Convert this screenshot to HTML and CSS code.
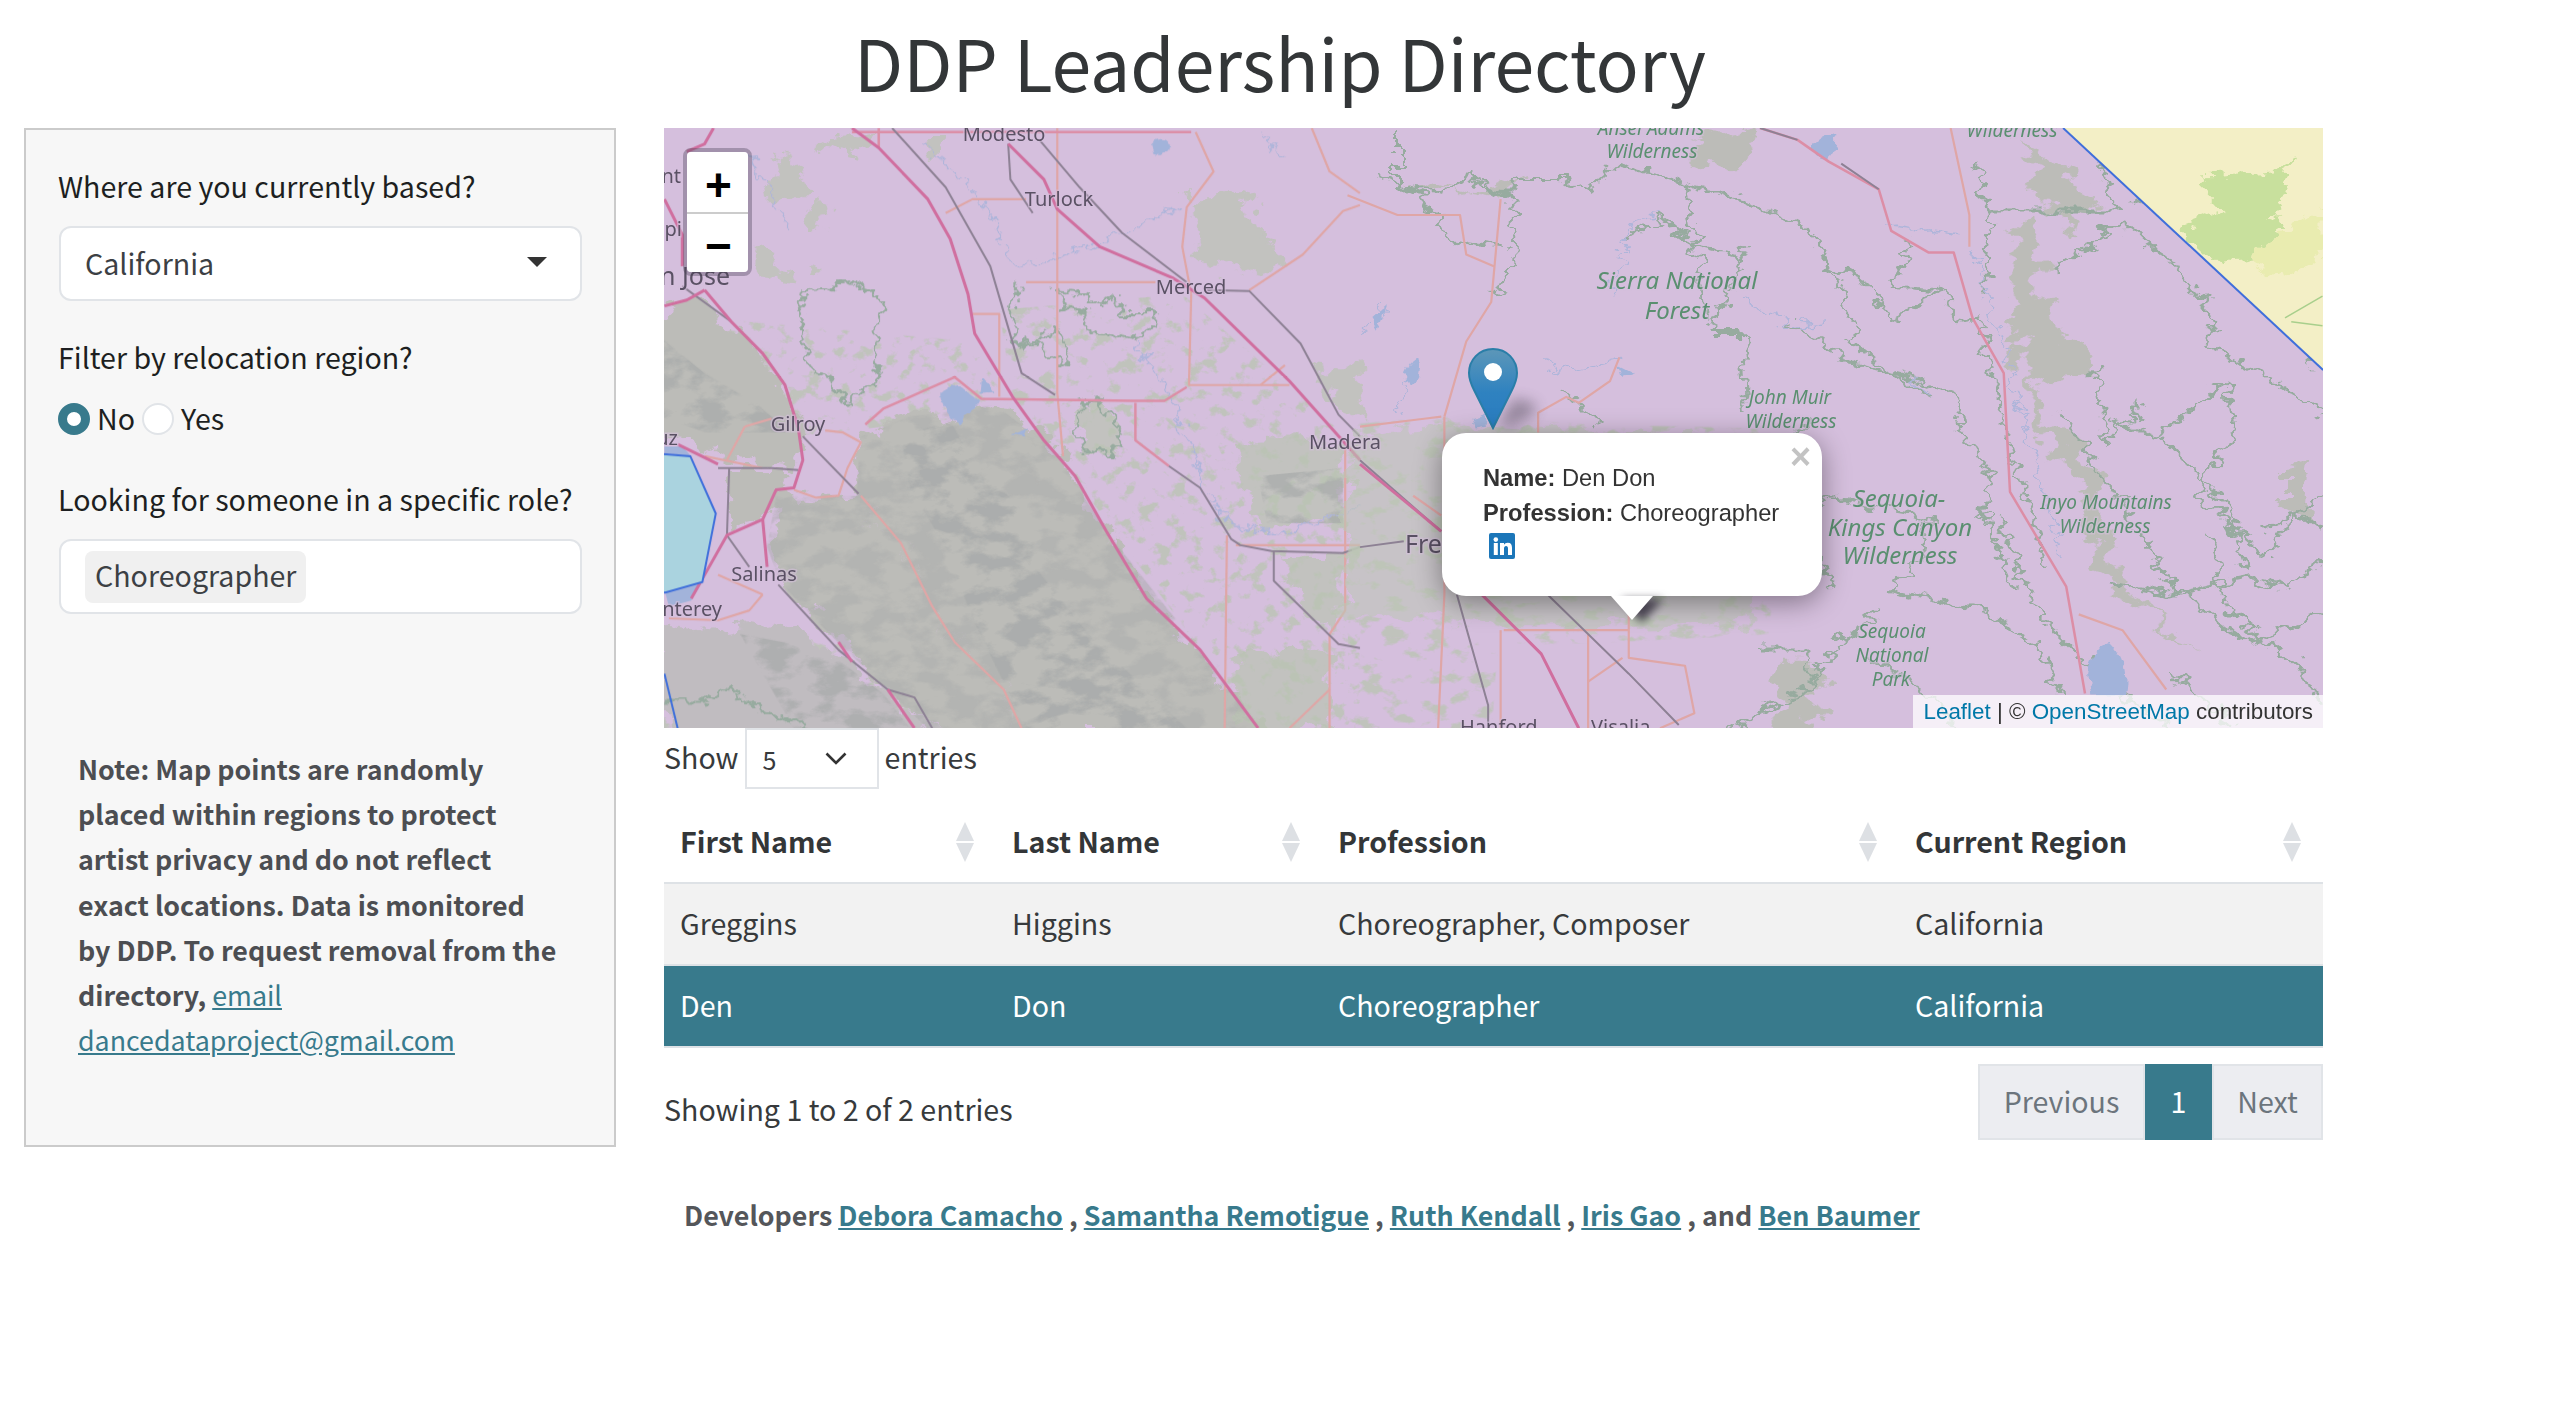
FILE: index.html
```html
<!DOCTYPE html>
<html lang="en">
<head>
<meta charset="utf-8">
<title>DDP Leadership Directory</title>
<link rel="stylesheet" href="styles.css">
</head>
<body>
<svg class="defs" width="0" height="0" aria-hidden="true">
  <defs>
    <symbol id="sort" viewBox="0 0 18 40">
      <path d="M9 0L18 19H0Z"/><path d="M0 21H18L9 40Z"/>
    </symbol>
    <filter id="rough" x="-10%" y="-10%" width="120%" height="120%">
      <feTurbulence type="fractalNoise" baseFrequency=".018" numOctaves="5" seed="4" result="n"/>
      <feDisplacementMap in="SourceGraphic" in2="n" scale="90" xChannelSelector="R" yChannelSelector="G"/>
      <feGaussianBlur stdDeviation=".8"/>
    </filter>
    <filter id="wiggle" x="-5%" y="-5%" width="110%" height="110%">
      <feTurbulence type="fractalNoise" baseFrequency=".035" numOctaves="3" seed="12" result="n"/>
      <feDisplacementMap in="SourceGraphic" in2="n" scale="50" xChannelSelector="R" yChannelSelector="G"/>
    </filter>
    <filter id="blob" x="-20%" y="-20%" width="140%" height="140%">
      <feTurbulence type="fractalNoise" baseFrequency=".05" numOctaves="2" seed="3" result="n"/>
      <feDisplacementMap in="SourceGraphic" in2="n" scale="18" xChannelSelector="R" yChannelSelector="G"/>
    </filter>
    <filter id="mottle" x="-5%" y="-5%" width="110%" height="110%">
      <feTurbulence type="fractalNoise" baseFrequency=".014 .022" numOctaves="5" seed="9" result="n"/>
      <feColorMatrix in="n" type="matrix" values="0 0 0 0 0  0 0 0 0 0  0 0 0 0 0  5 0 0 0 -2.1" result="a"/>
      <feComposite in="SourceGraphic" in2="a" operator="in"/>
      <feGaussianBlur stdDeviation="1"/>
    </filter>
    <filter id="grain" x="-5%" y="-5%" width="110%" height="110%">
      <feTurbulence type="fractalNoise" baseFrequency=".028" numOctaves="4" seed="21" result="n"/>
      <feColorMatrix in="n" type="matrix" values="0 0 0 0 0  0 0 0 0 0  0 0 0 0 0  7 0 0 0 -3.9" result="a"/>
      <feComposite in="SourceGraphic" in2="a" operator="in"/>
    </filter>
    <linearGradient id="pin" x1="0" y1="0" x2="0" y2="1">
      <stop offset="0" stop-color="#5d97b8"/>
      <stop offset=".55" stop-color="#2f82c0"/>
      <stop offset="1" stop-color="#2a7cc0"/>
    </linearGradient>
    <filter id="blur" x="-50%" y="-50%" width="200%" height="200%"><feGaussianBlur stdDeviation="7"/></filter>
  </defs>
</svg>

<h1 class="title">DDP Leadership Directory</h1>

<div class="layout">
  <aside class="sidebar">
    <label class="field-label first">Where are you currently based?</label>
    <div class="control select-control">
      <span>California</span>
      <span class="caret"></span>
    </div>

    <label class="field-label">Filter by relocation region?</label>
    <div class="radios">
      <span class="radio checked"></span><span class="radio-text">No</span>
      <span class="radio"></span><span class="radio-text">Yes</span>
    </div>

    <label class="field-label">Looking for someone in a specific role?</label>
    <div class="control tag-control">
      <span class="tag">Choreographer</span>
    </div>

    <p class="note"><b>Note: Map points are randomly placed within regions to protect artist privacy and do not reflect exact locations. Data is monitored by DDP. To request removal from the directory,</b> <a href="#">email dancedataproject@gmail.com</a></p>
  </aside>

  <main class="content">
    <section class="map">
      <svg class="map-svg" viewBox="0 0 1659 600" preserveAspectRatio="none" aria-hidden="true">
        <rect class="m-land" width="1659" height="600"/>

        <!-- west half: coordinates traced at 2.24 x 2.529 -->
        <g transform="translate(-4 -7.9) scale(.4464 .3954)">
          <g filter="url(#grain)">
            <path class="m-grain" d="M760 480L1170 440 1568 830V1538H1340L900 860 790 700Z"/>
            <path class="m-grain" d="M-20 1300H620V1540H-20Z"/>
            <path class="m-grain" d="M100 500L700 560 790 740 300 800Z"/>
          </g>
          <g filter="url(#rough)">
            <path class="m-range" d="M450 800L560 750 650 770 750 720 880 830 930 900 1000 1040 1090 1210 1210 1340 1360 1560H810L770 1440 610 1230 540 1070 440 950Z"/>
            <path class="m-range" d="M-20 500L60 450 160 520 260 640 300 740 330 800 300 880 150 860 60 800 -20 790Z"/>
            <path class="m-range" d="M150 890L300 890 280 960 230 1010 150 1030Z"/>
            <path class="m-range2" d="M-20 1280L100 1290 260 1270 370 1330 500 1440 620 1560H30Z"/>
            <path class="m-range" d="M260 950L440 950 540 1070 610 1230 770 1440 810 1560H620L500 1420 380 1300 270 1170 240 1080Z"/>
            <path class="m-soft" d="M240 100L300 95 330 190 260 190Z"/>
            <path class="m-soft" d="M210 310L270 340 290 420 220 410Z"/>
            <path class="m-soft" d="M340 215L385 220 370 290 330 280Z"/>
            <path class="m-soft" d="M340 360L375 365 370 400 340 395Z"/>
            <path class="m-soft" d="M1180 190L1310 190 1390 360 1310 390 1200 350Z"/>
            <path class="m-soft" d="M370 40L470 30 440 90 360 70Z"/>
            <path class="m-soft" d="M590 40L640 40 640 90 600 90Z"/>
            <path class="m-soft" d="M1290 810L1440 800 1540 830 1535 1030 1340 1030Z"/>
            <path class="m-soft" d="M940 720L1010 730 1030 840 950 840Z"/>
            <path class="m-soft" d="M1400 1100L1530 1100 1530 1300 1450 1240 1390 1170Z"/>
            <path class="m-soft" d="M1470 630L1568 610V770L1520 740Z"/>
            <path class="m-soft" d="M1290 1340L1500 1350 1500 1538H1300Z"/>
          </g>
          <g filter="url(#mottle)">
            <path class="m-dark" d="M540 800L650 760 720 900 830 990 840 1130 960 1300 1200 1560H830L700 1260 640 1080 560 930Z"/>
            <path class="m-dark2" d="M450 800L560 750 750 720 880 830 1000 1040 1210 1340 1360 1560H620L380 1300 270 1170 240 1080 260 950H440Z"/>
            <path class="m-dark" d="M-20 530L100 640 220 720 290 790 100 790 -20 740Z"/>
            <path class="m-dark" d="M180 1300L370 1340 500 1450 560 1538H300Z"/>
            <path class="m-dark" d="M1340 900L1530 880 1530 1020 1360 1020Z"/>
          </g>
          <g class="m-park" filter="url(#wiggle)">
            <path d="M320 430L390 425 410 410 490 440 505 500 480 530 480 600 490 650 420 720 380 650 350 640 320 590 325 520 310 480Z"/>
            <path d="M890 430L960 440 970 470 1010 445 1040 490 1115 490 1110 520 1050 555 950 530 960 490 900 470Z"/>
            <path d="M800 410L790 520 805 570 890 530 910 600 900 620 850 560 810 575"/>
            <path d="M940 720L975 705 1030 780 1020 845 950 835 930 780Z"/>
            <path d="M10 1470L100 1470 150 1440 240 1500 330 1530"/>
          </g>
          <g class="m-river" filter="url(#wiggle)">
            <path d="M590 60L680 150 745 250 790 370 890 345 985 310 1100 250 1170 220"/>
            <path d="M1060 560L1130 670 1200 850 1220 950 1290 1030 1400 1040 1568 980"/>
            <path d="M200 90L290 280"/>
            <path d="M1350 30L1390 100"/>
          </g>
          <g class="m-water" filter="url(#blob)">
            <path d="M630 692C650 680 660 660 672 672L715 712C700 745 680 745 672 772C650 750 630 720 630 692Z"/>
            <path d="M722 648L750 690 718 692Z"/>
            <path d="M1100 62C1115 45 1140 48 1140 65C1140 90 1115 92 1105 85Z"/>
            <path d="M790 795L825 780 815 800Z"/>
          </g>
          <g class="m-water">
            <path d="M12 1195L95 1168 70 1215 20 1230Z"/>
            <path d="M10 825L50 825 70 850 10 842Z"/>
          </g>
          <g class="m-minor">
            <path d="M640 235L700 200H820"/>
            <path d="M890 20V690L903 850"/>
            <path d="M820 410H1110"/>
            <path d="M700 490H760V700"/>
            <path d="M1190 440L1185 670H1410"/>
            <path d="M1200 30L1240 130 1180 220 1170 320 1190 440"/>
            <path d="M1320 430L1440 340 1530 230 1568 215"/>
            <path d="M1345 670L1400 620"/>
            <path d="M1270 1050L1265 1538"/>
            <path d="M1290 1075H1568"/>
            <path d="M1535 830V1240L1500 1300V1538"/>
            <path d="M1500 1440L1410 1538"/>
            <path d="M450 950L540 1070 610 1230 660 1320 770 1440 810 1538"/>
            <path d="M190 775L250 755"/>
            <path d="M190 775L150 860"/>
            <path d="M370 785L410 790 450 815 420 880 400 950 350 955 300 935"/>
            <path d="M1460 20L1500 130 1568 185"/>
            <path d="M100 850L230 880"/>
            <path d="M130 1150L230 1200"/>
            <path d="M230 1200L200 1240 130 1265 20 1260"/>
          </g>
          <g class="m-main">
            <path d="M460 770L500 730 600 680 660 650 720 705 1060 710 1130 710 1180 675"/>
            <path d="M1065 715V810L1140 875"/>
            <path d="M430 30H680"/>
            <path d="M680 30H1190"/>
            <path d="M490 20V70"/>
          </g>
          <g class="m-rail">
            <path d="M520 20L640 170 740 370 810 640 885 695"/>
            <path d="M780 60L785 150 835 235"/>
            <path d="M850 50L940 170 1035 285 1180 410"/>
            <path d="M1225 430L1320 432 1435 565 1520 745 1568 800"/>
            <path d="M1140 875L1210 930 1280 1060 1300 1075 1370 1090 1530 1095 1568 1080"/>
            <path d="M1375 1090V1165L1520 1325 1568 1335"/>
            <path d="M265 1175L400 1340 510 1440 570 1460 610 1538"/>
            <path d="M320 800L445 945"/>
            <path d="M50 420L160 510 230 590 280 670 310 780"/>
            <path d="M130 880L250 880 310 885"/>
            <path d="M155 880L150 1050 200 1130"/>
          </g>
          <g class="m-highway">
            <path d="M430 20L490 70 600 200 650 300 690 440 705 540 790 700 860 810 930 900 1000 1040 1090 1210 1210 1340 1340 1538"/>
            <path d="M100 430L160 510 230 590 280 670 310 780 320 860 300 930 260 935 230 1010 150 1050 110 1130 70 1210"/>
            <path d="M780 60L860 150 890 225 985 320 1150 400 1220 450 1410 660 1568 860"/>
            <path d="M10 200L50 290 50 370"/>
            <path d="M10 470L60 455 100 430"/>
            <path d="M60 80L100 60 120 20"/>
            <path d="M510 1440L570 1538"/>
            <path d="M400 1320L430 1370"/>
            <path d="M230 1010L240 1130"/>
            <path d="M40 820L130 870"/>
          </g>
          <path class="m-ocean" d="M-20 842L68 850 125 995 95 1168 12 1195 -20 1195Z"/>
          <path class="m-edge" d="M10 1400L40 1540"/>
        </g>

        <!-- east half: coordinates traced at 1.6 x 2.529 -->
        <g transform="translate(696 -7.9) scale(.625 .3954)">
          <g filter="url(#grain)">
            <path class="m-grain" d="M-20 770L130 750 380 770 640 780 660 1300 400 1320 220 1330 -20 1300Z"/>
            <path class="m-grain" d="M-20 1300L220 1330 210 1560H-20Z"/>
          </g>
          <g filter="url(#rough)">
            <path class="m-range" d="M1040 280L1085 240 1100 500 1170 600 1175 650 1080 670 1100 750 1190 900 1200 1100 1260 1240 1345 1345 1290 1290 1200 1180 1160 1060 1150 920 1090 780 1060 620 1040 440Z"/>
            <path class="m-range" d="M1060 50L1130 130 1175 200 1140 290 1090 200Z"/>
            <path class="m-range" d="M670 1360L730 1360V1560H670Z"/>
            <path class="m-range" d="M70 150L130 190 260 150 240 200 200 190Z"/>
            <path class="m-range" d="M550 40L620 20 640 90 590 130 540 110Z"/>
            <path class="m-soft2" d="M-20 790L130 770 380 790 600 800 640 1210 640 1270 400 1280 220 1280 -20 1240Z"/>
            <path class="m-range" d="M1480 870L1530 860 1520 1010 1480 980Z"/>
          </g>
          <g class="m-park" filter="url(#wiggle)">
            <path d="M60 20V170L130 180 180 130 190 170 235 180 260 150H330L360 180 410 110 480 140 520 160 630 210 720 280 750 370 810 410 850 510 930 420 960 510 990 500 1020 700 1060 940 1100 1130"/>
            <path d="M430 300L480 245 540 320 610 350 620 330 560 540 610 540 620 740"/>
            <path d="M690 510L780 610 880 650 950 690 960 780 1010 900 1000 1000 1050 1190"/>
            <path d="M520 160L560 510"/>
            <path d="M790 560L860 650 910 690"/>
            <path d="M1010 230H1210L1170 60"/>
            <path d="M1110 380L1220 260 1300 360 1370 500 1350 570 1440 640 1540 740"/>
            <path d="M1200 760L1270 800 1390 660 1400 780 1340 950 1450 1100 1500 1000 1540 950"/>
            <path d="M1180 620L1190 820 1250 720 1240 760"/>
            <path d="M1120 740L1230 1000 1300 1180 1420 1320 1540 1250"/>
            <path d="M1200 1170L1290 1200 1420 1160 1480 1180 1540 1120"/>
            <path d="M760 960L910 1000 900 1100 850 1190 1000 1240 1080 1320 1120 1450"/>
            <path d="M650 1040L760 950"/>
            <path d="M640 1340H720V1430L600 1538"/>
            <path d="M1300 1400L1400 1538"/>
            <path d="M810 1360L900 1440 960 1538"/>
            <path d="M330 690L380 770"/>
            <path d="M190 150L245 200 240 410 210 440"/>
            <path d="M1440 1040L1500 990 1540 1040"/>
            <path d="M1240 200L1330 260 1400 300"/>
            <path d="M600 1100L680 1000 760 1180"/>
            <path d="M20 130L100 190 140 300 230 320"/>
            <path d="M720 280L770 420 800 580"/>
            <path d="M880 300L850 420 930 430"/>
            <path d="M980 100L1010 240 1000 430"/>
            <path d="M1020 1000L1090 1260 1210 1440 1300 1538"/>
            <path d="M1280 800L1380 960 1420 1140"/>
            <path d="M1440 390L1510 480 1520 620"/>
            <path d="M830 1240L760 1330 720 1430"/>
            <path d="M560 960L650 880 720 760"/>
            <path d="M1360 1040L1390 1240 1500 1380 1540 1480"/>
          </g>
          <g class="m-river" filter="url(#wiggle)">
            <path d="M400 450L440 250 480 240"/>
            <path d="M610 450L690 520 750 510"/>
            <path d="M980 320L1040 620 1120 1100"/>
            <path d="M300 600L320 640 420 600"/>
            <path d="M850 270L960 290"/>
            <path d="M60 740L90 620"/>
            <path d="M880 650L910 690"/>
            <path d="M0 540L45 470"/>
          </g>
          <g class="m-water" filter="url(#blob)">
            <path d="M1165 1400C1170 1350 1190 1320 1200 1320C1220 1350 1230 1400 1222 1455H1170Z"/>
            <path d="M725 60C735 40 755 30 760 35C765 60 760 95 745 100C730 100 722 80 725 60Z"/>
            <path d="M72 640C78 620 88 600 92 605C95 630 90 665 80 670Z"/>
            <path d="M20 500L45 465 30 530Z"/>
            <path d="M415 620L440 640 420 650Z"/>
            <path d="M180 755L200 745 205 775 185 780Z"/>
          </g>
          <g class="m-minor">
            <path d="M225 200L210 460 170 560 135 750"/>
            <path d="M-20 190L60 240 160 240 170 340 215 370"/>
            <path d="M130 750L0 775"/>
            <path d="M135 750V1200L125 1538"/>
            <path d="M945 20L975 240V320"/>
            <path d="M1150 1250L1220 1290 1290 1440"/>
            <path d="M230 1290H430"/>
            <path d="M225 1290V1538"/>
            <path d="M365 1300V1538"/>
            <path d="M430 1200V1360L520 1380 535 1500 480 1538"/>
            <path d="M420 1360L365 1420"/>
            <path d="M85 950L130 1000"/>
            <path d="M415 600L400 660 350 715 330 700 285 740V790"/>
          </g>
          <g class="m-main">
            <path d="M640 20L700 50 750 105 830 175 850 280 910 335H950L980 500 1030 640 1040 940 1130 1180 1160 1450"/>
          </g>
          <g class="m-rail">
            <path d="M155 1200L205 1480V1538"/>
            <path d="M300 1200L430 1400 510 1530"/>
            <path d="M0 860L130 1040"/>
            <path d="M0 1080L70 1065"/>
            <path d="M770 110L830 175"/>
            <path d="M640 20L700 50"/>
          </g>
          <g class="m-highway">
            <path d="M195 1200L290 1350 350 1538"/>
            <path d="M0 870L130 1040"/>
          </g>
          <path class="m-nevada" d="M1125 20L1560 20 1560 660Z"/>
          <path class="m-desert" filter="url(#wiggle)" d="M1350 140L1470 130 1490 90 1480 180 1460 260 1470 290 1420 350 1370 360 1310 270 1380 230 1350 180Z"/>
          <path class="m-desert2" filter="url(#wiggle)" d="M1470 290L1540 225V350L1470 400 1420 350Z"/>
          <path class="m-park-light" d="M1480 500L1540 445M1490 510L1540 520"/>
          <path class="m-edge" d="M1125 20L1541 632"/>
        </g>

        <g class="lab">
          <text x="340" y="13" text-anchor="middle">Modesto</text>
          <text x="395" y="78" text-anchor="middle">Turlock</text>
          <text x="527" y="166" text-anchor="middle">Merced</text>
          <text x="134" y="303" text-anchor="middle">Gilroy</text>
          <text x="100" y="453" text-anchor="middle">Salinas</text>
          <text x="58" y="488" text-anchor="end">nterey</text>
          <text x="17" y="55" text-anchor="end">nt</text>
          <text x="18" y="108" text-anchor="end">lpi</text>
          <text x="14" y="317" text-anchor="end">uz</text>
          <text class="lab-big" x="66" y="157" text-anchor="end">n Jose</text>
          <text x="681" y="321" text-anchor="middle">Madera</text>
          <text class="lab-big" x="741" y="425">Fresno</text>
          <text x="796" y="606">Hanford</text>
          <text x="927" y="606">Visalia</text>
        </g>
        <g class="lab-green">
          <text x="987" y="7" text-anchor="middle">Ansel Adams</text>
          <text x="988" y="30" text-anchor="middle">Wilderness</text>
          <text x="1348" y="9" text-anchor="middle">Wilderness</text>
          <text class="g-big" x="1013" y="161" text-anchor="middle">Sierra National</text>
          <text class="g-big" x="1013" y="191" text-anchor="middle">Forest</text>
          <text x="1126" y="276" text-anchor="middle">John Muir</text>
          <text x="1127" y="300" text-anchor="middle">Wilderness</text>
          <text class="g-big" x="1235" y="379" text-anchor="middle">Sequoia-</text>
          <text class="g-big" x="1236" y="408" text-anchor="middle">Kings Canyon</text>
          <text class="g-big" x="1236" y="436" text-anchor="middle">Wilderness</text>
          <text x="1442" y="381" text-anchor="middle">Inyo Mountains</text>
          <text x="1441" y="405" text-anchor="middle">Wilderness</text>
          <text x="1228" y="510" text-anchor="middle">Sequoia</text>
          <text x="1228" y="534" text-anchor="middle">National</text>
          <text x="1227" y="558" text-anchor="middle">Park</text>
        </g>
      </svg>

      <div class="zoom">
        <span class="zoom-btn">+</span>
        <span class="zoom-btn">−</span>
      </div>

      <svg class="pin" viewBox="0 0 90 82" aria-hidden="true">
        <path class="pin-shadow" d="M30 78L46 50 68 56 66 66 44 78Z" filter="url(#blur)"/>
        <path d="M25 1C11 1 1 12 1 25C1 31 3 36 6 42L25 80 44 42C47 36 49 31 49 25C49 12 39 1 25 1Z" fill="url(#pin)" stroke="#2a7ea8" stroke-width="2"/>
        <circle cx="25" cy="24" r="9" fill="#fff"/>
      </svg>

      <div class="popup">
        <span class="popup-close">×</span>
        <div class="popup-line"><b>Name:</b> Den Don</div>
        <div class="popup-line"><b>Profession:</b> Choreographer</div>
        <svg class="linkedin" viewBox="0 0 26 26" aria-label="LinkedIn">
          <rect width="26" height="26" rx="2" fill="#1b76b9"/>
          <circle cx="6.8" cy="6.6" r="2.3" fill="#fff"/>
          <rect x="4.8" y="10" width="4" height="12" fill="#fff"/>
          <path d="M11 10H15V11.8C15.7 10.6 17 9.7 18.8 9.7C21.8 9.7 23 11.6 23 14.8V22H19V15.6C19 14 18.4 13 17.1 13C15.7 13 15 14.1 15 15.6V22H11Z" fill="#fff"/>
        </svg>
        <span class="popup-tip"></span>
      </div>

      <div class="attribution"><a href="#">Leaflet</a> | © <a href="#">OpenStreetMap</a> contributors</div>
    </section>

    <div class="length">
      <span>Show</span>
      <div class="length-select">
        <span>5</span>
        <svg class="chevron" viewBox="0 0 22 13" aria-hidden="true"><path d="M1.5 1.5L11 11 20.5 1.5"/></svg>
      </div>
      <span>entries</span>
    </div>

    <table class="table">
      <colgroup>
        <col class="c1"><col class="c2"><col class="c3"><col class="c4">
      </colgroup>
      <thead>
        <tr>
          <th><div class="th-inner">First Name<svg class="sort"><use href="#sort"/></svg></div></th>
          <th><div class="th-inner">Last Name<svg class="sort"><use href="#sort"/></svg></div></th>
          <th><div class="th-inner">Profession<svg class="sort"><use href="#sort"/></svg></div></th>
          <th><div class="th-inner">Current Region<svg class="sort"><use href="#sort"/></svg></div></th>
        </tr>
      </thead>
      <tbody>
        <tr class="odd"><td>Greggins</td><td>Higgins</td><td>Choreographer, Composer</td><td>California</td></tr>
        <tr class="selected"><td>Den</td><td>Don</td><td>Choreographer</td><td>California</td></tr>
      </tbody>
    </table>

    <div class="table-foot">
      <div class="info">Showing 1 to 2 of 2 entries</div>
      <div class="pager">
        <span class="pg pg-prev">Previous</span>
        <span class="pg pg-current">1</span>
        <span class="pg pg-next">Next</span>
      </div>
    </div>

    <p class="credits">Developers <a href="#">Debora Camacho</a> , <a href="#">Samantha Remotigue</a> , <a href="#">Ruth Kendall</a> , <a href="#">Iris Gao</a> , and <a href="#">Ben Baumer</a></p>
  </main>
</div>
</body>
</html>
```

FILE: styles.css
```css
* { box-sizing: border-box; }

html, body {
  margin: 0;
  background: #fff;
}

body {
  height: 1422px;
  overflow: hidden;
  font-family: "Noto Sans CJK SC", "Noto Sans", sans-serif;
  font-size: 28.6px;
  line-height: 48px;
  color: #373a3c;
}

a { color: #387a8c; }

.defs { position: absolute; }

.title {
  margin: 0;
  height: 128px;
  font-size: 71.5px;
  font-weight: 400;
  line-height: 122px;
  text-align: center;
  color: #333638;
}

.layout {
  display: grid;
  grid-template-columns: 592px 1659px;
  column-gap: 48px;
  padding-left: 24px;
  align-items: start;
}

/* sidebar */
.sidebar {
  height: 1019px;
  padding: 32px 32px 0 33px;
  background: #f7f7f7;
  border: 2px solid #cbcbcb;
}

.field-label {
  display: block;
  margin: 32px 0 0 -1px;
  color: #1d1f21;
}
.field-label.first { margin: 0 0 16px -1px; }

.control {
  display: flex;
  align-items: center;
  height: 75px;
  margin-top: 16px;
  background: #fff;
  border: 2px solid #e1e4e8;
  border-radius: 12px;
  color: #3c4044;
}

.select-control {
  justify-content: space-between;
  padding: 0 33px 2px 24px;
}

.caret {
  width: 0;
  height: 0;
  margin-top: -1px;
  border-style: solid;
  border-width: 10px 10px 0;
  border-color: #333 transparent transparent;
}

.radios {
  display: flex;
  align-items: center;
  height: 48px;
  margin-top: 14px;
}

.radio {
  width: 32px;
  height: 32px;
  margin-left: -1px;
  background: #fff;
  border: 2px solid #e1e4e8;
  border-radius: 50%;
}
.radio.checked { border: 9px solid #387a8c; }

.radio-text {
  margin: 0 8px 3px 7px;
  color: #1d1f21;
}

.tag-control { padding-left: 24px; }

.tag {
  height: 52px;
  padding: 0 10px;
  line-height: 48px;
  background: #f0f0f0;
  border-radius: 8px;
}

.note {
  width: 482px;
  margin: 132px 0 0 19px;
  font-size: 26.8px;
  line-height: 45.2px;
  color: #4c4e52;
}
.note b { font-weight: 700; }

/* map */
.map {
  position: relative;
  height: 600px;
  overflow: hidden;
  background: #d5bfdd;
}

.map-svg {
  display: block;
  width: 100%;
  height: 100%;
  filter: blur(.6px);
}

.m-land { fill: #d5bfdd; }
.m-range { fill: #bcbcb8; }
.m-range2 { fill: #c0bcc0; }
.m-soft { fill: #b9c3b2; opacity: .7; }
.m-soft2 { fill: #bcc6b4; opacity: .55; }
.m-dark { fill: #a6aaa9; opacity: .7; }
.m-dark2 { fill: #a9acab; opacity: .5; }
.m-grain { fill: #b8c4b0; opacity: .75; }

.m-park, .m-river, .m-minor, .m-main, .m-rail, .m-highway, .m-edge, .m-park-light {
  fill: none;
  stroke-linejoin: round;
}
.m-park path, .m-river path, .m-minor path, .m-main path, .m-rail path, .m-highway path, .m-edge, .m-ocean, .m-park-light {
  vector-effect: non-scaling-stroke;
}
.m-park { stroke: #97ab9f; stroke-width: 3; }
.m-park-light { stroke: #a8cf8c; stroke-width: 1.5; }
.m-river { stroke: #aeb5da; stroke-width: 1.5; }
.m-water { fill: #a2b3da; }
.m-minor { stroke: #dfa6a6; stroke-width: 2.2; }
.m-main { stroke: #dc8ea6; stroke-width: 2.5; }
.m-rail { stroke: #8d8194; stroke-width: 2; }
.m-highway { stroke: #d06f9f; stroke-width: 3; }
.m-edge { stroke: #3f6fdb; stroke-width: 2; }
.m-ocean { fill: #aad3df; stroke: #3f6fdb; stroke-width: 2; }
.m-nevada { fill: #f3efc6; }
.m-desert { fill: #c8e09d; }
.m-desert2 { fill: #e9ecb0; }

.lab text {
  font-family: "Noto Sans", sans-serif;
  font-size: 20px;
  fill: #5a5164;
  stroke: #d5bfdd;
  stroke-width: 3px;
  stroke-opacity: .55;
  paint-order: stroke;
}
.lab .lab-big { font-size: 25px; }

.lab-green text {
  font-family: "Noto Sans", sans-serif;
  font-size: 19px;
  font-style: italic;
  fill: #5a8f70;
  stroke: #d5bfdd;
  stroke-width: 3px;
  stroke-opacity: .55;
  paint-order: stroke;
}
.lab-green .g-big { font-size: 24px; }

/* Leaflet overlays */
.zoom {
  position: absolute;
  top: 20px;
  left: 19px;
  width: 69px;
  border: 4px solid rgba(70, 60, 80, .35);
  border-radius: 8px;
  overflow: hidden;
  background-clip: padding-box;
}

.zoom-btn {
  display: block;
  height: 60px;
  padding-left: 2px;
  background: #fff;
  font-family: "Liberation Sans", sans-serif;
  font-size: 46px;
  font-weight: 700;
  line-height: 66px;
  text-align: center;
  color: #000;
}
.zoom-btn + .zoom-btn {
  height: 60px;
  border-top: 2px solid #ccc;
  line-height: 64px;
}

.pin {
  position: absolute;
  top: 220px;
  left: 804px;
  width: 90px;
  height: 82px;
  overflow: visible;
}
.pin-shadow { fill: #4a4550; opacity: .45; }

.popup {
  position: absolute;
  top: 305px;
  left: 778px;
  width: 380px;
  height: 163px;
  padding: 28px 41px 0;
  background: #fff;
  border-radius: 24px;
  box-shadow: 0 6px 28px rgba(0, 0, 0, .4);
  font-family: "Liberation Sans", sans-serif;
  font-size: 23.7px;
  line-height: 35px;
  color: #333;
}

.popup-close {
  position: absolute;
  top: 8px;
  right: 11px;
  font-family: "Liberation Sans", sans-serif;
  font-size: 36px;
  font-weight: 700;
  line-height: 32px;
  color: #c3c3c3;
}

.popup-line { white-space: nowrap; }

.linkedin {
  display: block;
  width: 26px;
  height: 26px;
  margin: 2px 0 0 6px;
}

.popup-tip {
  position: absolute;
  top: 163px;
  left: 190px;
  width: 0;
  height: 0;
  margin-left: -21px;
  border-style: solid;
  border-width: 24px 21px 0;
  border-color: #fff transparent transparent;
  filter: drop-shadow(10px 3px 4px rgba(45, 40, 55, .8));
}

.attribution {
  position: absolute;
  right: 0;
  bottom: 0;
  height: 33px;
  padding: 0 10px;
  background: rgba(255, 255, 255, .75);
  font-family: "Liberation Sans", sans-serif;
  font-size: 22.4px;
  line-height: 33px;
  color: #333;
}
.attribution a { color: #0078a8; text-decoration: none; }

/* table controls */
.length {
  display: flex;
  align-items: center;
  gap: 6px;
  height: 61px;
}
.length > span { padding-bottom: 3px; }

.length-select {
  display: flex;
  align-items: center;
  justify-content: space-between;
  width: 134px;
  height: 61px;
  padding: 0 30px 0 16px;
  border: 2px solid #e1e4e8;
  font-size: 25px;
}

.chevron {
  width: 22px;
  height: 13px;
  fill: none;
  stroke: #333;
  stroke-width: 2.6;
}

.table {
  width: 1659px;
  margin-top: 14px;
  border-collapse: separate;
  border-spacing: 0;
  table-layout: fixed;
}
.c1 { width: 332px; }
.c2 { width: 326px; }
.c3 { width: 577px; }
.c4 { width: 424px; }

.table th {
  height: 81px;
  padding: 0 31px 3px 16px;
  border-bottom: 2px solid #dee2e6;
  text-align: left;
  font-weight: 700;
  color: #333638;
}

.th-inner {
  display: flex;
  align-items: center;
  justify-content: space-between;
}

.sort {
  width: 18px;
  height: 40px;
  margin: 2px -9px 0 0;
  fill: #dde0e4;
}

.table td {
  height: 82px;
  padding: 0 16px 3px;
  border-bottom: 2px solid #dee2e6;
}

.odd td { background: #f2f2f2; }
.selected td { background: #387a8c; color: #fff; }

.table-foot {
  display: flex;
  justify-content: space-between;
  align-items: flex-start;
  margin-top: 16px;
}

.info { margin-top: 21px; }

.pager {
  display: flex;
  height: 76px;
  color: #6c757d;
}

.pg {
  line-height: 69px;
  background: #ecedf1;
  border: 2px solid #e1e4e8;
  text-align: center;
}
.pg-prev { width: 167px; }
.pg-current { width: 67px; background: #387a8c; border-color: #387a8c; color: #fff; }
.pg-next { width: 111px; }

.credits {
  margin: 51px 0 0 20px;
  font-size: 26.8px;
  font-weight: 700;
  color: #54565a;
}
.credits a { color: #387a8c; }
```
